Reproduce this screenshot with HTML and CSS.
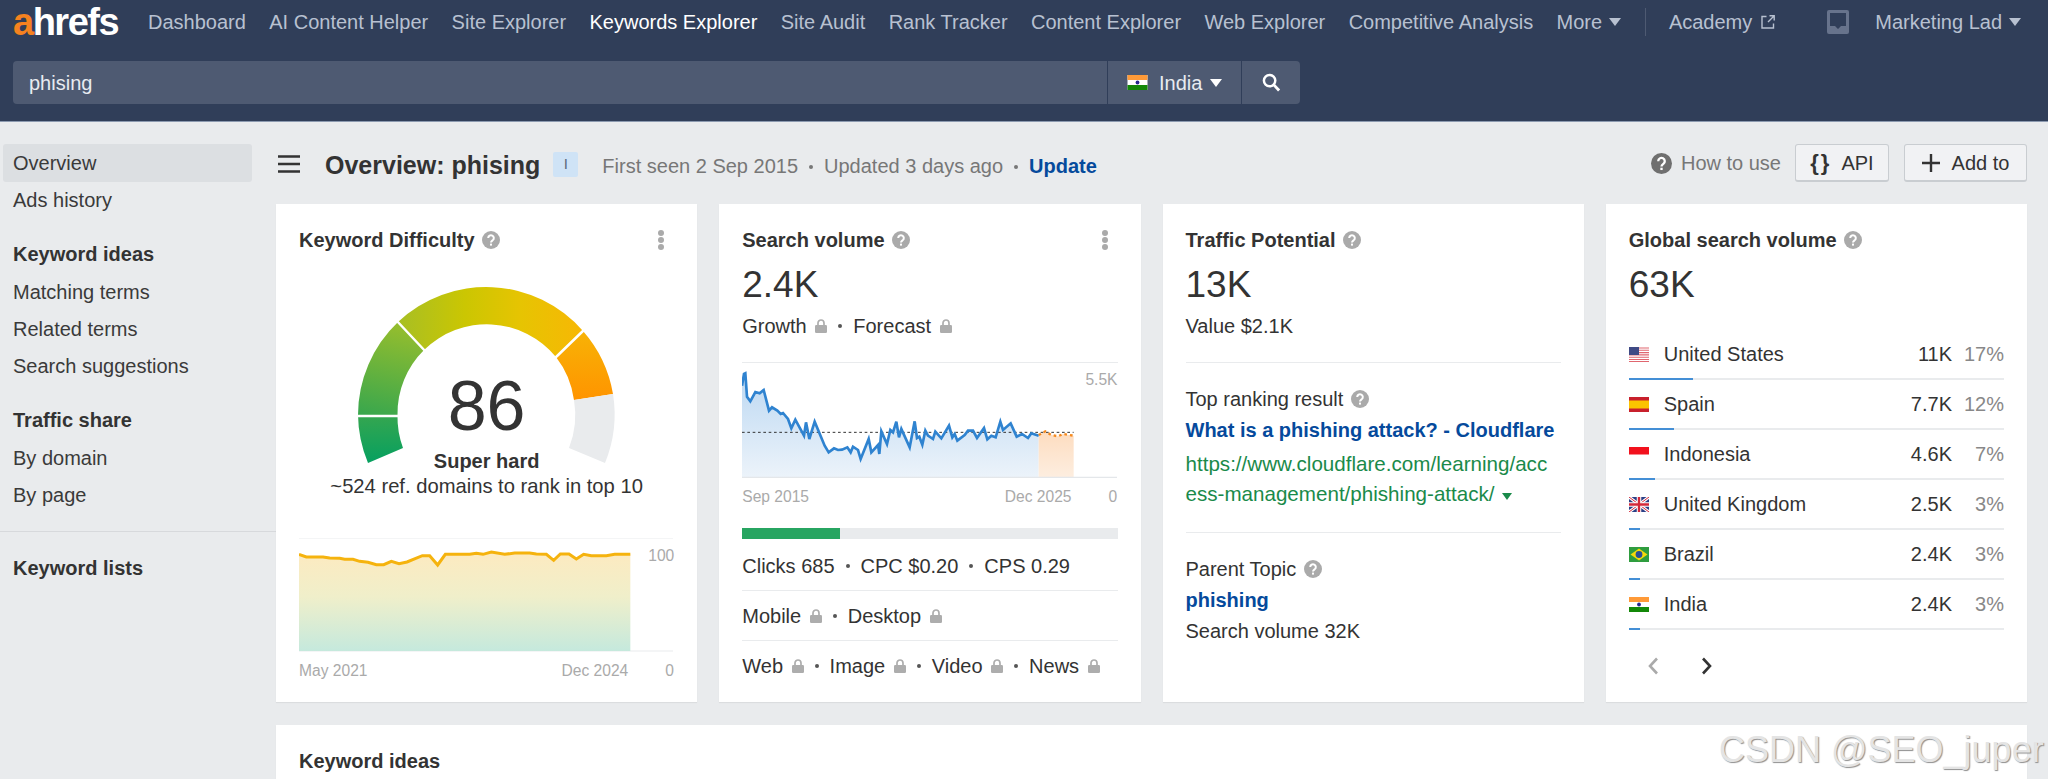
FILE: index.html
```html
<!DOCTYPE html>
<html lang="en">
<head>
<meta charset="utf-8">
<title>Ahrefs Keywords Explorer</title>
<link rel="stylesheet" href="styles.css">
</head>
<body>
<svg class="defs" xmlns="http://www.w3.org/2000/svg" width="0" height="0">
  <defs>
  <symbol id="help" viewBox="0 0 18 18"><circle cx="9" cy="9" r="9" fill="currentColor"/><path d="M6.2 7a2.8 2.8 0 1 1 4.4 2.3c-1 .7-1.6 1.1-1.6 2.3" fill="none" stroke="#fff" stroke-width="2"/><rect x="8" y="12.6" width="2" height="2" fill="#fff"/></symbol>
  <symbol id="lock" viewBox="0 0 12 14"><path d="M3 6V4a3 3 0 0 1 6 0v2" fill="none" stroke="#adadad" stroke-width="1.7"/><rect x="0" y="6" width="12" height="8" rx="1.2" fill="#adadad"/></symbol>
  <symbol id="f-us" viewBox="0 0 20 15"><rect width="20" height="15" fill="#fff"/><path d="M0 1h20M0 3.3h20M0 5.6h20M0 7.9h20M0 10.2h20M0 12.5h20M0 14.5h20" stroke="#e0666f" stroke-width="1.1"/><rect width="10" height="8" fill="#3f4a85"/></symbol>
  <symbol id="f-es" viewBox="0 0 20 15"><rect width="20" height="15" fill="#c8202c"/><rect y="3.5" width="20" height="8" fill="#fbc400"/></symbol>
  <symbol id="f-id" viewBox="0 0 20 15"><rect width="20" height="15" fill="#fff"/><rect width="20" height="7.5" fill="#f2111d"/></symbol>
  <symbol id="f-uk" viewBox="0 0 20 15"><rect width="20" height="15" fill="#2b3f86"/><path d="M0 0l20 15M20 0L0 15" stroke="#fff" stroke-width="3"/><path d="M0 0l20 15M20 0L0 15" stroke="#d3283a" stroke-width="1"/><path d="M10 0v15M0 7.5h20" stroke="#fff" stroke-width="4.5"/><path d="M10 0v15M0 7.5h20" stroke="#d3283a" stroke-width="2.4"/></symbol>
  <symbol id="f-br" viewBox="0 0 20 15"><rect width="20" height="15" fill="#2f9d3f"/><path d="M10 1.500L18.500 7.500 10 13.500 1.500 7.500z" fill="#f5d90a"/><circle cx="10" cy="7.500" r="3.400" fill="#2a4f94"/></symbol>
  <symbol id="f-in" viewBox="0 0 20 15"><rect width="20" height="15" fill="#fff"/><rect width="20" height="5" fill="#ff9a38"/><rect y="10" width="20" height="5" fill="#138808"/><circle cx="10" cy="7.500" r="1.900" fill="#26268f"/></symbol>
  <linearGradient id="g1" gradientUnits="userSpaceOnUse" x1="0" y1="416" x2="0" y2="463"><stop offset="0" stop-color="#34a650"/><stop offset="1" stop-color="#06a060"/></linearGradient>
  <linearGradient id="g2" gradientUnits="userSpaceOnUse" x1="390" y1="325" x2="370" y2="416"><stop offset="0" stop-color="#93bd2e"/><stop offset="1" stop-color="#39a74d"/></linearGradient>
  <linearGradient id="g3" gradientUnits="userSpaceOnUse" x1="400" y1="0" x2="585" y2="0"><stop offset="0" stop-color="#a8bf23"/><stop offset=".35" stop-color="#cbc602"/><stop offset=".65" stop-color="#e6c402"/><stop offset="1" stop-color="#f8b705"/></linearGradient>
  <linearGradient id="g4" gradientUnits="userSpaceOnUse" x1="0" y1="335" x2="0" y2="400"><stop offset="0" stop-color="#f8b105"/><stop offset="1" stop-color="#ff9400"/></linearGradient>
  <linearGradient id="kdfill" x1="0" y1="0" x2="0" y2="1"><stop offset="0" stop-color="#fdeac0"/><stop offset=".45" stop-color="#f0efca"/><stop offset="1" stop-color="#c5e9dd"/></linearGradient>
  <linearGradient id="svfill" x1="0" y1="0" x2="0" y2="1"><stop offset="0" stop-color="#bcd8f2"/><stop offset="1" stop-color="#ecf3fa"/></linearGradient>
  <linearGradient id="fcfill" x1="0" y1="0" x2="0" y2="1"><stop offset="0" stop-color="#fddcbf"/><stop offset="1" stop-color="#fdeee0"/></linearGradient>
  </defs>
</svg>

<header class="header">
  <div class="topbar">
    <div class="logo"><span class="logo-a">a</span>hrefs</div>
    <nav class="nav">
      <a>Dashboard</a>
      <a>AI Content Helper</a>
      <a>Site Explorer</a>
      <a class="active">Keywords Explorer</a>
      <a>Site Audit</a>
      <a>Rank Tracker</a>
      <a>Content Explorer</a>
      <a>Web Explorer</a>
      <a>Competitive Analysis</a>
      <a class="with-caret">More <i class="caret"></i></a>
      <span class="nav-sep"></span>
      <a class="with-caret">Academy
        <svg class="ext" viewBox="0 0 14 14" width="14" height="14"><path d="M5.500 1.500H1v11.500h11.500V8.500M7 7l6-6M8.500 .8H13.200V5.500" fill="none" stroke="#b8c1d1" stroke-width="1.400"/></svg>
      </a>
    </nav>
    <div class="user">
      <svg class="inbox" viewBox="0 0 22 24" width="22" height="24"><path d="M2 0h18a2 2 0 0 1 2 2v20a2 2 0 0 1-2 2H2a2 2 0 0 1-2-2V2a2 2 0 0 1 2-2z" fill="#67738c"/><path d="M3 3h16v13h-5l-3 3-3-3H3z" fill="#303e59"/></svg>
      <a class="with-caret">Marketing Lad <i class="caret"></i></a>
    </div>
  </div>
  <div class="searchbar">
    <div class="search-input">phising</div>
    <div class="search-country">
      <svg class="flag" width="21" height="15"><use href="#f-in"/></svg>
      India <i class="caret white"></i>
    </div>
    <div class="search-btn">
      <svg viewBox="0 0 20 20" width="19" height="19"><circle cx="8" cy="8" r="6" fill="none" stroke="#fff" stroke-width="2.600"/><path d="M12.500 12.500L18 18.500" stroke="#fff" stroke-width="3"/></svg>
    </div>
  </div>
</header>

<div class="page">
  <aside class="sidebar">
    <a class="side-item current">Overview</a>
    <a class="side-item">Ads history</a>
    <div class="side-head">Keyword ideas</div>
    <a class="side-item">Matching terms</a>
    <a class="side-item">Related terms</a>
    <a class="side-item">Search suggestions</a>
    <div class="side-head">Traffic share</div>
    <a class="side-item">By domain</a>
    <a class="side-item">By page</a>
    <div class="side-rule"></div>
    <div class="side-head last">Keyword lists</div>
  </aside>

  <main class="main">
    <div class="titlebar">
      <svg class="burger" viewBox="0 0 22 18" width="22" height="18"><path d="M0 1.500h22M0 9h22M0 16.500h22" stroke="#333" stroke-width="2.600"/></svg>
      <h1 class="page-title">Overview: phising</h1>
      <span class="badge">I</span>
      <span class="meta">First seen 2 Sep 2015<i class="dot"></i>Updated 3 days ago<i class="dot"></i><a class="update">Update</a></span>
      <span class="how"><svg class="help-big" width="21" height="21"><use href="#help"/></svg>How to use</span>
      <button class="btn api"><b class="braces">{}</b>API</button>
      <button class="btn add"><svg viewBox="0 0 18 18" width="18" height="18"><path d="M9 0v18M0 9h18" stroke="#333" stroke-width="2.400"/></svg>Add to</button>
    </div>

    <div class="cards">
      <section class="card">
        <div class="card-title">Keyword Difficulty <svg class="help" width="18" height="18"><use href="#help"/></svg>
          <svg class="kebab" viewBox="0 0 6 20" width="6" height="20"><circle cx="3" cy="3" r="3"/><circle cx="3" cy="10" r="3"/><circle cx="3" cy="17" r="3"/></svg></div>
        <div class="gauge">
          <svg class="gauge-svg" viewBox="299 270 375 195" width="375" height="195">
            <path d="M368 463A128.500 128.500 0 0 1 358 415H397.500A89.500 89.500 0 0 0 403 448Z" fill="url(#g1)"/>
            <path d="M358 415A128.500 128.500 0 0 1 398 322L424 350A89.500 89.500 0 0 0 397.500 415Z" fill="url(#g2)"/>
            <path d="M398 322A128.500 128.500 0 0 1 583 331L556 357A89.500 89.500 0 0 0 424 350Z" fill="url(#g3)"/>
            <path d="M583 331A128.500 128.500 0 0 1 613 394L574 400A89.500 89.500 0 0 0 556 357Z" fill="url(#g4)"/>
            <path d="M613 394A128.500 128.500 0 0 1 605 463L569 448A89.500 89.500 0 0 0 574 400Z" fill="#e9ebed"/>
            <path d="M356 416H399M396 320L426 352M585 329L554 359" stroke="#fff" stroke-width="2.500"/>
          </svg>
          <div class="gauge-text">
            <div class="kd-num">86</div>
            <div class="kd-label">Super hard</div>
            <div class="kd-sub">~524 ref. domains to rank in top 10</div>
          </div>
        </div>
        <div class="kd-chart chart">
          <svg viewBox="88 85 1125 342" width="375" height="114">
            <path d="M88 85H1210M88 424H1210" stroke="#e9ebed" stroke-width="3" fill="none"/>
            <path d="M88 134L110 142 160 142 180 145 210 146 225 149 250 149 270 155 295 158 320 165 342 165 365 155 388 162 412 157 458 138 480 138 504 166 527 134 600 134 620 131 640 134 665 127 705 134 735 130 780 130 800 133 830 134 852 152 872 133 898 133 920 148 942 134 965 138 1010 138 1035 134 1082 134V424H88Z" fill="url(#kdfill)"/>
            <path d="M88 134L110 142 160 142 180 145 210 146 225 149 250 149 270 155 295 158 320 165 342 165 365 155 388 162 412 157 458 138 480 138 504 166 527 134 600 134 620 131 640 134 665 127 705 134 735 130 780 130 800 133 830 134 852 152 872 133 898 133 920 148 942 134 965 138 1010 138 1035 134 1082 134" fill="none" stroke="#f5b30e" stroke-width="9"/>
          </svg>
          <span class="chart-max kd-max">100</span>
        </div>
        <div class="axis"><span>May 2021</span><span class="axis-end">Dec 2024</span><span class="axis-zero">0</span></div>
      </section>

      <section class="card">
        <div class="card-title">Search volume <svg class="help" width="18" height="18"><use href="#help"/></svg>
          <svg class="kebab" viewBox="0 0 6 20" width="6" height="20"><circle cx="3" cy="3" r="3"/><circle cx="3" cy="10" r="3"/><circle cx="3" cy="17" r="3"/></svg></div>
        <div class="big">2.4K</div>
        <div class="sub">Growth <svg class="lock" width="12" height="14"><use href="#lock"/></svg><i class="dot"></i>Forecast <svg class="lock" width="12" height="14"><use href="#lock"/></svg></div>
        <div class="rule r-top"></div>
        <div class="sv-chart chart">
          <svg viewBox="82 487 1125 345" width="375" height="115">
            <path d="M82 555L88 520 92 518 97 588 107 602 122 574 135 578 147 568 163 630 172 620 188 630 198 640 205 637 220 655 230 683 242 657 268 705 274 665 284 715 300 663 330 735 342 755 358 743 370 748 382 747 398 740 408 755 415 738 430 748 438 775 462 715 470 755 490 733 494 760 500 692 517 730 527 688 535 695 545 663 553 710 560 685 585 740 600 662 607 712 614 708 623 732 632 690 640 705 655 715 662 693 680 713 703 675 713 710 720 700 728 720 750 703 760 690 775 690 787 712 808 682 818 716 830 705 843 710 857 663 865 688 888 668 906 708 922 700 940 712 950 698 972 705V830H82Z" fill="url(#svfill)"/>
            <path d="M972 703L992 692 1010 703 1030 707 1045 700 1077 705V830H972Z" fill="url(#fcfill)"/>
            <path d="M82 830H1207" stroke="#e4e7ea" stroke-width="4"/>
            <path d="M82 695H1077" stroke="#333" stroke-width="3" stroke-dasharray="8 8"/>
            <path d="M82 555L88 520 92 518 97 588 107 602 122 574 135 578 147 568 163 630 172 620 188 630 198 640 205 637 220 655 230 683 242 657 268 705 274 665 284 715 300 663 330 735 342 755 358 743 370 748 382 747 398 740 408 755 415 738 430 748 438 775 462 715 470 755 490 733 494 760 500 692 517 730 527 688 535 695 545 663 553 710 560 685 585 740 600 662 607 712 614 708 623 732 632 690 640 705 655 715 662 693 680 713 703 675 713 710 720 700 728 720 750 703 760 690 775 690 787 712 808 682 818 716 830 705 843 710 857 663 865 688 888 668 906 708 922 700 940 712 950 698 972 705" fill="none" stroke="#2f83d0" stroke-width="8"/>
            <path d="M972 703L992 692 1010 703 1030 707 1045 700 1077 705" fill="none" stroke="#f58a1f" stroke-width="7" stroke-dasharray="8 9"/>
          </svg>
          <span class="chart-max sv-max">5.5K</span>
        </div>
        <div class="axis"><span>Sep 2015</span><span class="axis-end">Dec 2025</span><span class="axis-zero">0</span></div>
        <div class="clicks-bar"><div class="clicks-fill" style="width:26%"></div></div>
        <div class="stat-row">Clicks 685<i class="dot"></i>CPC $0.20<i class="dot"></i>CPS 0.29</div>
        <div class="stat-row">Mobile <svg class="lock" width="12" height="14"><use href="#lock"/></svg><i class="dot"></i>Desktop <svg class="lock" width="12" height="14"><use href="#lock"/></svg></div>
        <div class="stat-row plain">Web <svg class="lock" width="12" height="14"><use href="#lock"/></svg><i class="dot"></i>Image <svg class="lock" width="12" height="14"><use href="#lock"/></svg><i class="dot"></i>Video <svg class="lock" width="12" height="14"><use href="#lock"/></svg><i class="dot"></i>News <svg class="lock" width="12" height="14"><use href="#lock"/></svg></div>
      </section>

      <section class="card">
        <div class="card-title">Traffic Potential <svg class="help" width="18" height="18"><use href="#help"/></svg></div>
        <div class="big">13K</div>
        <div class="sub">Value $2.1K</div>
        <div class="rule r-top"></div>
        <div class="tp-label">Top ranking result <svg class="help" width="18" height="18"><use href="#help"/></svg></div>
        <div class="tp-link first"><a>What is a phishing attack? - Cloudflare</a></div>
        <div class="tp-url">https://www.cloudflare.com/learning/acc<br>ess-management/phishing-attack/ <i class="caret green"></i></div>
        <div class="rule r-mid"></div>
        <div class="tp-parent">Parent Topic <svg class="help" width="18" height="18"><use href="#help"/></svg></div>
        <div class="tp-link"><a>phishing</a></div>
        <div class="tp-vol">Search volume 32K</div>
      </section>

      <section class="card">
        <div class="card-title">Global search volume <svg class="help" width="18" height="18"><use href="#help"/></svg></div>
        <div class="big">63K</div>
        <ul class="countries">
          <li class="country"><div class="c-main"><svg class="c-flag" width="20" height="15"><use href="#f-us"/></svg><span class="c-name">United States</span><span class="c-val">11K</span><span class="c-pct">17%</span></div><div class="c-track"><div class="c-fill" style="width:17%"></div></div></li>
          <li class="country"><div class="c-main"><svg class="c-flag" width="20" height="15"><use href="#f-es"/></svg><span class="c-name">Spain</span><span class="c-val">7.7K</span><span class="c-pct">12%</span></div><div class="c-track"><div class="c-fill" style="width:12%"></div></div></li>
          <li class="country"><div class="c-main"><svg class="c-flag" width="20" height="15"><use href="#f-id"/></svg><span class="c-name">Indonesia</span><span class="c-val">4.6K</span><span class="c-pct">7%</span></div><div class="c-track"><div class="c-fill" style="width:7%"></div></div></li>
          <li class="country"><div class="c-main"><svg class="c-flag" width="20" height="15"><use href="#f-uk"/></svg><span class="c-name">United Kingdom</span><span class="c-val">2.5K</span><span class="c-pct">3%</span></div><div class="c-track"><div class="c-fill" style="width:3%"></div></div></li>
          <li class="country"><div class="c-main"><svg class="c-flag" width="20" height="15"><use href="#f-br"/></svg><span class="c-name">Brazil</span><span class="c-val">2.4K</span><span class="c-pct">3%</span></div><div class="c-track"><div class="c-fill" style="width:3%"></div></div></li>
          <li class="country"><div class="c-main"><svg class="c-flag" width="20" height="15"><use href="#f-in"/></svg><span class="c-name">India</span><span class="c-val">2.4K</span><span class="c-pct">3%</span></div><div class="c-track"><div class="c-fill" style="width:3%"></div></div></li>
        </ul>
        <div class="pager">
          <svg viewBox="0 0 12 18" width="12" height="18"><path d="M10 1.500L3 9l7 7.500" fill="none" stroke="#aaa" stroke-width="2.600"/></svg>
          <svg viewBox="0 0 12 18" width="12" height="18"><path d="M2 1.500L9 9l-7 7.500" fill="none" stroke="#333" stroke-width="2.600"/></svg>
        </div>
      </section>
    </div>

    <section class="card wide">
      <div class="card-title">Keyword ideas</div>
    </section>
  </main>
</div>
<div class="watermark">CSDN @SEO_juper</div>
</body>
</html>
```

FILE: styles.css
```css
* { box-sizing: border-box; }
html, body { margin: 0; height: 779px; overflow: hidden; }
body {
  position: relative;
  background: #e9ebed;
  color: #333;
  font-family: "Liberation Sans", Arial, sans-serif;
  font-size: 20px;
  line-height: 24px;
}
.defs { position: absolute; width: 0; height: 0; overflow: hidden; }
a { color: inherit; text-decoration: none; }
i { font-style: normal; }
ul { list-style: none; margin: 0; padding: 0; }

/* header */
.header { height: 122px; background: #303e59; border-bottom: 1px solid #8c9ab0; padding: 0 0 0 13px; }
.topbar { height: 44px; display: flex; align-items: center; color: #b8c1d1; }
.logo { width: 135px; font-size: 38px; font-weight: 700; letter-spacing: -1.500px; color: #fff; line-height: 44px; }
.logo-a { color: #f58220; }
.nav { display: flex; align-items: center; gap: 23.400px; }
.nav .active { color: #fff; }
.with-caret { display: inline-flex; align-items: center; gap: 7px; }
.caret { display: inline-block; width: 0; height: 0; border-left: 6px solid transparent; border-right: 6px solid transparent; border-top: 8px solid #b8c1d1; }
.caret.white { border-top-color: #fff; }
.caret.green { border-left-width: 5px; border-right-width: 5px; border-top: 7px solid #1a8a4a; margin-left: 2px; vertical-align: 1px; }
.nav-sep { width: 1px; height: 28px; background: #4e5a72; }
.ext { margin-left: 2px; }
.user { display: flex; align-items: center; margin-left: 52px; gap: 26px; }
.searchbar { display: flex; height: 43px; width: 1287px; margin-top: 17px; color: #e8ebf0; }
.search-input { flex: 1; background: #4e5a72; border-radius: 4px 0 0 4px; padding: 1px 0 0 16px; line-height: 43px; }
.search-country { width: 133px; margin-left: 1px; background: #4e5a72; display: flex; align-items: center; padding-left: 19px; gap: 8px; }
.search-country .flag { margin-right: 3px; }
.search-btn { width: 58px; margin-left: 1px; background: #4e5a72; border-radius: 0 4px 4px 0; display: flex; align-items: center; justify-content: center; }

/* layout */
.page { display: flex; }
.sidebar { width: 276px; flex: none; padding-top: 22px; }
.side-item { display: block; height: 37.300px; line-height: 37.300px; margin-left: 3px; width: 249px; padding-left: 10px; border-radius: 3px; color: #3a3a3a; }
.side-item.current { background: #dcdfe2; height: 38px; line-height: 39px; }
.side-head { font-weight: 700; height: 37.300px; line-height: 37.300px; margin-top: 17px; padding-left: 13px; }
.side-head.last { margin-top: 18px; }
.side-rule { height: 1px; background: #d7d9dc; margin-top: 17px; }
.main { flex: 1; padding: 22px 21px 0 0; min-width: 0; }

/* title bar */
.titlebar { display: flex; align-items: center; height: 38px; }
.burger { margin-left: 2px; margin-right: 25px; margin-top: 2px; }
.page-title { margin: 0; padding-top: 3px; font-size: 25px; font-weight: 700; line-height: 38px; }
.badge { width: 25px; height: 25px; margin-left: 13px; margin-top: 3px; background: #cfe3f6; border-radius: 2px; text-align: center; font-size: 15px; line-height: 24px; color: #5d6b7d; }
.meta { margin-left: 24px; color: #777; padding-top: 5px; }
.dot { display: inline-block; width: 4px; height: 4px; border-radius: 50%; background: #555; margin: 0 11px; vertical-align: 4px; }
.meta .dot { background: #777; }
.update { color: #054a9c; font-weight: 700; }
.how { margin-left: auto; display: flex; align-items: center; gap: 9px; color: #777; }
.help-big { color: #6f6f6f; }
.btn { height: 38px; background: #f1f2f4; border: 1px solid #c9cdd1; border-bottom-width: 2px; border-radius: 3px; font: inherit; color: #333; display: flex; align-items: center; justify-content: center; padding: 0; }
.api { width: 94px; margin-left: 14px; gap: 10px; }
.braces { font-size: 22px; letter-spacing: 2px; }
.add { width: 123px; margin-left: 15px; gap: 12px; }

/* cards */
.cards { display: grid; grid-template-columns: repeat(4, 1fr); gap: 22px; margin-top: 22px; }
.card { height: 498px; background: #fff; padding: 24px 23px 0; box-shadow: 0 1px 1px rgba(0, 0, 0, .06); }
.card.wide { margin-top: 23px; height: 54px; }
.card-title { display: flex; align-items: center; height: 24px; font-weight: 700; white-space: pre; }
.help { margin-left: 2px; color: #aaa; font-weight: 400; }
.kebab { margin-left: auto; margin-right: 10px; fill: #aaa; }
.big { height: 44px; line-height: 44px; margin-top: 11px; font-size: 37px; }
.sub { height: 24px; margin-top: 7px; display: flex; align-items: center; white-space: pre; }
.lock { margin-left: 3px; }
.rule { height: 1px; background: #e9ebed; }
.r-top { margin-top: 24px; }
.r-mid { margin-top: 23px; }

/* gauge */
.gauge { position: relative; height: 230px; margin-top: 18px; }
.gauge-svg { display: block; }
.gauge-text { position: absolute; top: 96px; left: 0; right: 0; text-align: center; }
.kd-num { font-size: 70px; line-height: 80px; }
.kd-label { font-weight: 700; margin-top: 3px; }
.kd-sub { margin-top: 1px; font-size: 20.200px; }

/* charts */
.chart { position: relative; }
.chart svg { display: block; }
.chart-max { position: absolute; right: 0; font-size: 15.600px; line-height: 20px; color: #aaa; }
.kd-chart { margin-top: 38px; }
.kd-max { top: 8px; }
.sv-max { top: 7px; }
.axis { display: flex; height: 20px; margin-top: 9px; font-size: 15.600px; line-height: 20px; color: #aaa; }
.axis-end { margin-left: auto; margin-right: 37px; }
.axis-zero { width: 5px; margin-right: 4px; }
.clicks-bar { height: 11px; margin-top: 21px; background: #e9ebed; }
.clicks-fill { height: 100%; background: #27a561; }
.stat-row { display: flex; align-items: center; height: 50px; border-bottom: 1px solid #e9ebed; white-space: pre; }
.stat-row.plain { border-bottom: 0; }
.clicks-bar + .stat-row { margin-top: 2px; }

/* traffic potential */
.tp-label { display: flex; align-items: center; white-space: pre; margin-top: 24px; height: 24px; }
.tp-link { margin-top: 7px; height: 24px; font-weight: 700; color: #054a9c; }
.tp-url { margin-top: 7px; line-height: 30px; font-size: 20.600px; color: #1a8a4a; white-space: nowrap; }
.tp-parent { display: flex; align-items: center; white-space: pre; margin-top: 24px; height: 24px; }
.tp-vol { margin-top: 7px; }

/* global volume */
.countries { margin-top: 23px; }
.country { height: 50px; }
.c-main { display: flex; align-items: center; height: 48px; }
.c-flag { flex: none; margin-right: 15px; }
.c-name { flex: 1; }
.c-val { width: 70px; text-align: right; }
.c-pct { width: 52px; text-align: right; color: #888; }
.c-track { height: 2px; background: #e9ebed; }
.c-fill { height: 100%; background: #448fd6; }
.pager { display: flex; gap: 42px; margin-top: 27px; padding-left: 18px; }

.watermark {
  position: absolute;
  left: 1719px;
  top: 728px;
  font-size: 36px;
  line-height: 44px;
  color: #e4e4e4;
  text-shadow: 1px 1px 1px #8f8f8f;
  white-space: nowrap;
}
```
